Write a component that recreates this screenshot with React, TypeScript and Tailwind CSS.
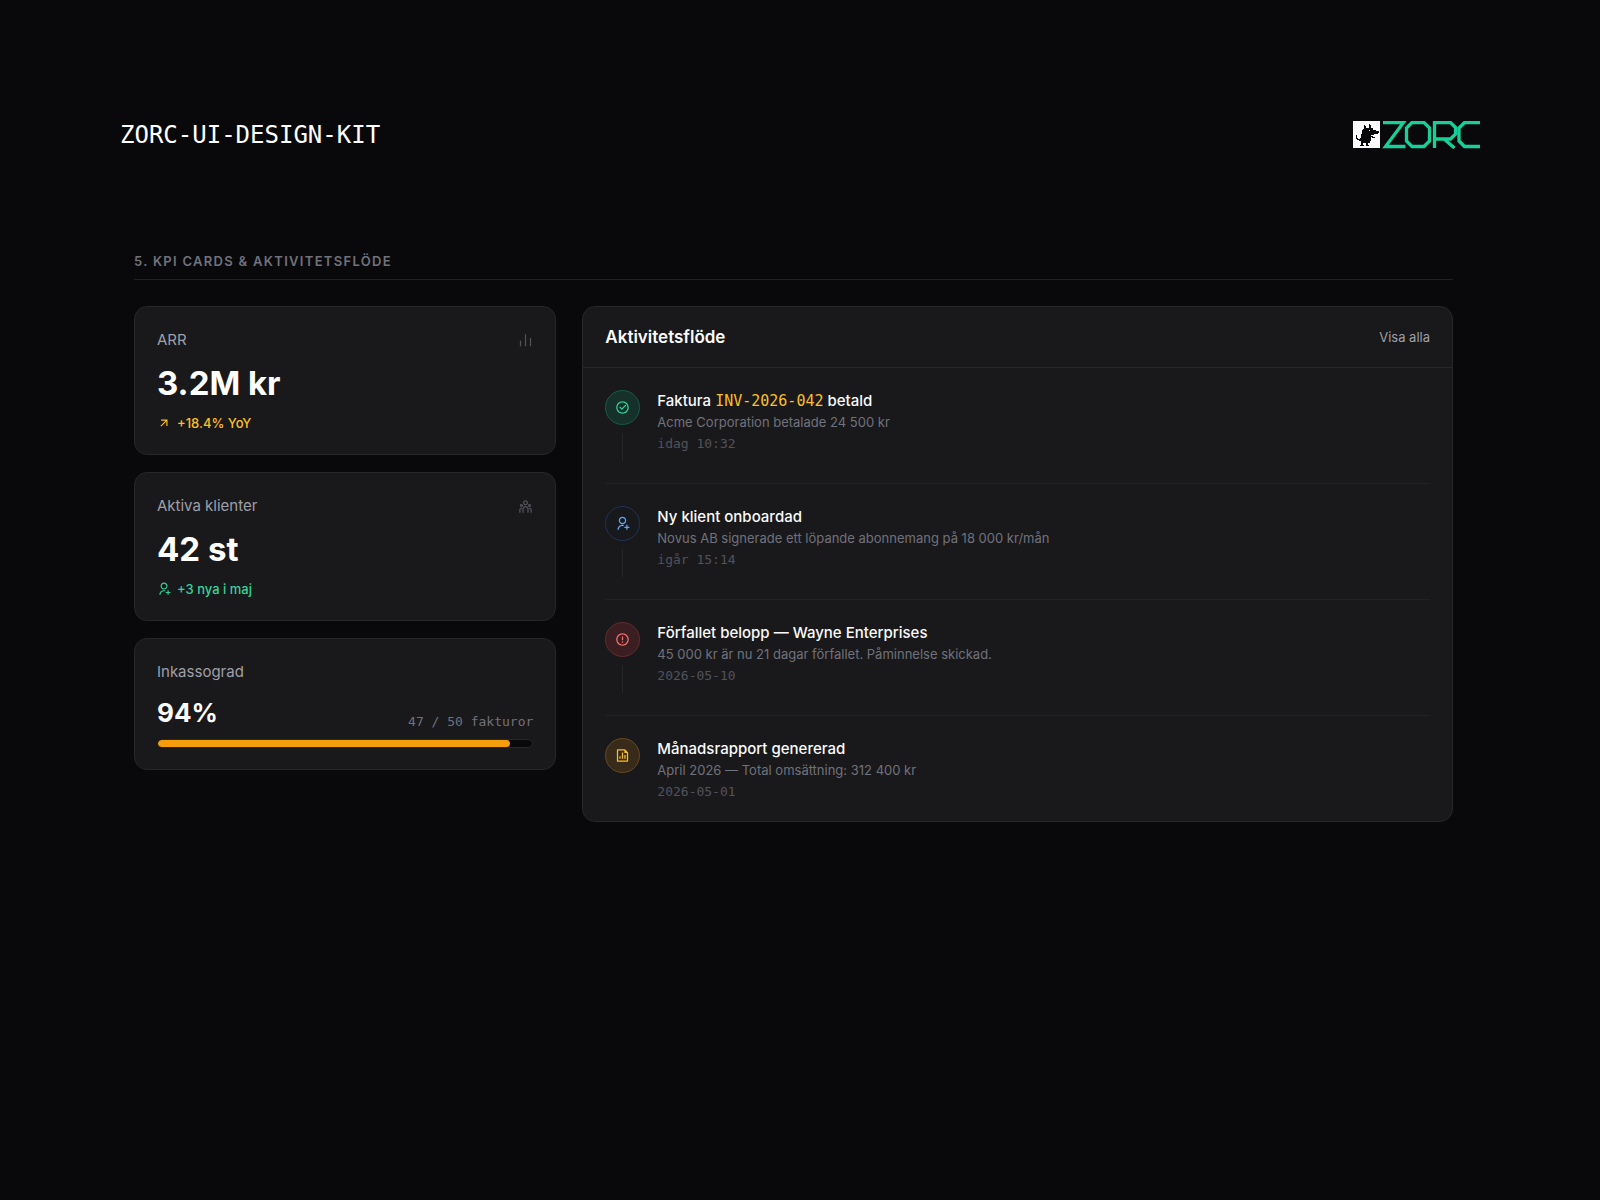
import type { ReactNode } from 'react';
import {
  RiArrowRightUpLine,
  RiBarChartLine,
  RiCheckboxCircleLine,
  RiErrorWarningLine,
  RiFileChartLine,
  RiTeamLine,
  RiUserAddLine,
} from 'react-icons/ri';

interface KpiCardProps {
  label: string;
  value: string;
  icon: ReactNode;
  trend: string;
  trendIcon: ReactNode;
  trendClass: string;
}

interface Activity {
  title: ReactNode;
  description: string;
  time: string;
  icon: ReactNode;
  iconClass: string;
}

const activities: Activity[] = [
  {
    title: (
      <>
        Faktura{' '}
        <span className="font-['DejaVu_Sans_Mono',monospace] font-normal text-[#fbbf24]">
          INV-2026-042
        </span>{' '}
        betald
      </>
    ),
    description: 'Acme Corporation betalade 24 500 kr',
    time: 'idag 10:32',
    icon: <RiCheckboxCircleLine size={15} />,
    iconClass: 'border-[#145c46] bg-[#163129] text-[#34d399]',
  },
  {
    title: 'Ny klient onboardad',
    description: 'Novus AB signerade ett löpande abonnemang på 18 000 kr/mån',
    time: 'igår 15:14',
    icon: <RiUserAddLine size={15} />,
    iconClass: 'border-[#20335a] bg-[#18191d] text-[#60a5fa]',
  },
  {
    title: 'Förfallet belopp — Wayne Enterprises',
    description: '45 000 kr är nu 21 dagar förfallet. Påminnelse skickad.',
    time: '2026-05-10',
    icon: <RiErrorWarningLine size={15} />,
    iconClass: 'border-[#652a2d] bg-[#3a1e21] text-[#f87171]',
  },
  {
    title: 'Månadsrapport genererad',
    description: 'April 2026 — Total omsättning: 312 400 kr',
    time: '2026-05-01',
    icon: <RiFileChartLine size={15} />,
    iconClass: 'border-[#67481a] bg-[#392b1a] text-[#fbbf24]',
  },
];

function Logo() {
  return (
    <svg viewBox="0 0 127 28" className="h-7 w-[127px]" role="img" aria-label="ZORC">
      <rect width="27" height="27" fill="#fafafa" />
      {/* Wolf mascot */}
      <path
        fill="#09090b"
        d="M11 4h1v1h1v2h3V3h1v1h1v3h2v2h3v1h3v2h-1v1h-4v1h-2v1h1v1h2v1h-3v-1h-1v4h-1v2h-2v2h1v1h-3v-3h-3v2h1v1h-4v-1h1v-2H8v-2H6v-1H4v-1H3v-4h1v3h1v1h2v-1h1v-4h1v-4h1V8h1z"
      />
      <path fill="#fafafa" d="M16 9h1v1h-1zM18 14h2v1h-2z" />
      {/* Wordmark */}
      <path
        fill="none"
        stroke="#18cf98"
        strokeWidth="3.3"
        d="M30 1.500h20.500L32.500 25.500h20M59 1.500h12l5.500 5.500v13l-5.500 5.500H59l-5.500-5.500V7zM81.500 27V1.500h16l5 5v6.500l-5 5H83M91 18l10.500 9M127 1.500h-15.500l-5.500 5.500v13l5.500 5.500H127"
      />
    </svg>
  );
}

function KpiCard({ label, value, icon, trend, trendIcon, trendClass }: KpiCardProps) {
  return (
    <article className="rounded-[13px] border border-[#27272a] bg-[#19191b] px-[22px] pb-[21px] pt-[22px]">
      <div className="flex items-center justify-between">
        <h3 className="text-[15px] leading-[22px] text-[#9f9fa9]">{label}</h3>
        <span className="text-[#52525b]">{icon}</span>
      </div>
      <p className="mt-[10px] text-[33px] font-bold leading-[44px] text-white">{value}</p>
      <p className={`mt-2 flex items-center gap-[6px] text-[13px] font-medium leading-5 ${trendClass}`}>
        {trendIcon}
        {trend}
      </p>
    </article>
  );
}

function CollectionCard() {
  const paid = 47;
  const total = 50;
  const percent = (paid / total) * 100;

  return (
    <article className="rounded-[13px] border border-[#27272a] bg-[#19191b] px-[22px] pb-[21px] pt-[22px]">
      <h3 className="text-[15px] leading-[22px] text-[#9f9fa9]">Inkassograd</h3>
      <div className="mt-3 flex items-end justify-between">
        <p className="text-[26px] font-bold leading-9 text-white">{percent}%</p>
        <p className="font-['DejaVu_Sans_Mono',monospace] text-[13px] leading-[18px] text-[#71717b]">
          {paid} / {total} fakturor
        </p>
      </div>
      <div className="mt-2 h-[9px] overflow-hidden rounded-full border border-[#27272a] bg-[#09090b]">
        <div className="h-full rounded-full bg-[#f59e0b]" style={{ width: `${percent}%` }} />
      </div>
    </article>
  );
}

function ActivityItem({ item, last }: { item: Activity; last: boolean }) {
  return (
    <li className={`flex gap-[17px] pt-[22px] ${last ? 'pb-[19px]' : 'border-b border-[#222225] pb-[22px]'}`}>
      <div className="flex flex-col items-center">
        <div className={`flex size-[35px] items-center justify-center rounded-full border ${item.iconClass}`}>
          {item.icon}
        </div>
        {!last && <div className="mt-2 h-7 w-px bg-[#27272a]" />}
      </div>
      <div>
        <h4 className="text-[15px] font-medium leading-[22px] text-[#fafafa]">{item.title}</h4>
        <p className="text-[13px] leading-5 text-[#71717b]">{item.description}</p>
        <time className="mt-[2px] block font-['DejaVu_Sans_Mono',monospace] text-[13px] leading-5 text-[#52525c]">
          {item.time}
        </time>
      </div>
    </li>
  );
}

function ActivityFeed() {
  return (
    <section className="col-span-2 rounded-[13px] border border-[#27272a] bg-[#19191b]">
      <header className="flex items-center justify-between border-b border-[#27272a] px-[22px] py-[18px]">
        <h3 className="text-[17px] font-semibold leading-6 text-[#fafafa]">Aktivitetsflöde</h3>
        <button type="button" className="text-[13px] leading-5 text-[#9f9fa9] hover:text-white">
          Visa alla
        </button>
      </header>
      <ul className="px-[22px]">
        {activities.map((item, index) => (
          <ActivityItem key={item.time} item={item} last={index === activities.length - 1} />
        ))}
      </ul>
    </section>
  );
}

export default function App() {
  return (
    <div className="min-h-screen bg-[#09090b] px-[120px] pt-[119px] font-['Inter',sans-serif]">
      <header className="flex items-center justify-between">
        <h1 className="font-['DejaVu_Sans_Mono',monospace] text-2xl text-white">ZORC-UI-DESIGN-KIT</h1>
        <Logo />
      </header>

      <main className="mt-[100px] pl-[14px] pr-[27px]">
        <h2 className="border-b border-[#222225] pb-2 text-[13px] font-semibold leading-5 tracking-widest text-[#71717b]">
          5. KPI CARDS &amp; AKTIVITETSFLÖDE
        </h2>
        <div className="mt-[26px] grid grid-cols-3 items-start gap-[26px]">
          <div className="flex flex-col gap-[17px]">
            <KpiCard
              label="ARR"
              value="3.2M kr"
              icon={<RiBarChartLine size={15} />}
              trend="+18.4% YoY"
              trendIcon={<RiArrowRightUpLine size={14} />}
              trendClass="text-[#fbbf24]"
            />
            <KpiCard
              label="Aktiva klienter"
              value="42 st"
              icon={<RiTeamLine size={15} />}
              trend="+3 nya i maj"
              trendIcon={<RiUserAddLine size={14} />}
              trendClass="text-[#34d399]"
            />
            <CollectionCard />
          </div>
          <ActivityFeed />
        </div>
      </main>
    </div>
  );
}
